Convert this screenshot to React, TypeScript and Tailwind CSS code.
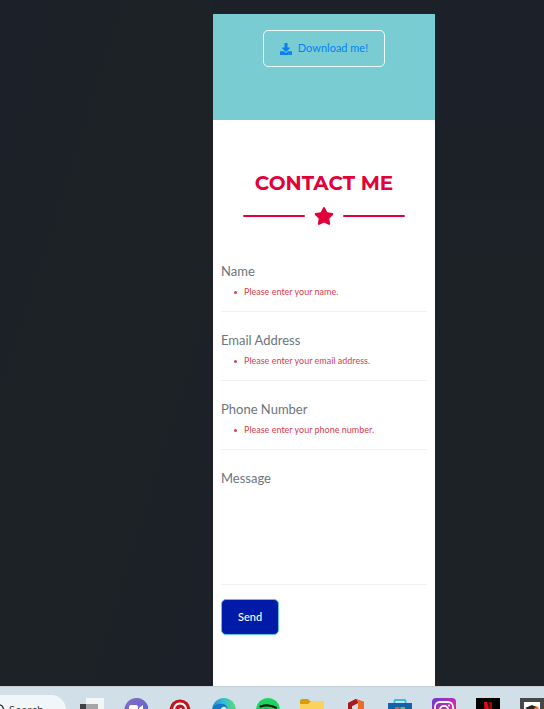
import type { ReactNode } from "react";
import { FaDownload, FaStar } from "react-icons/fa";

const fields = [
  { id: "name", label: "Name", type: "text", error: "Please enter your name." },
  { id: "email", label: "Email Address", type: "email", error: "Please enter your email address." },
  { id: "phone", label: "Phone Number", type: "tel", error: "Please enter your phone number." },
];

function Field({ id, label, type, error }: (typeof fields)[number]) {
  return (
    <div className="mb-4 h-[53px] border-b border-[#f1f2f3]">
      <input
        id={id}
        type={type}
        placeholder={label}
        aria-label={label}
        aria-describedby={`${id}-error`}
        className="block h-6 w-full bg-transparent text-[13px] leading-6 text-[#6c757d] outline-none placeholder:text-[#6c757d] placeholder:opacity-100"
      />
      <ul id={`${id}-error`} className="pl-[13px] text-[9px] leading-[18px] text-[#d9404f]">
        <li className="flex items-center gap-[7px] before:size-[3px] before:rounded-full before:bg-current">{error}</li>
      </ul>
    </div>
  );
}

function AppIcon({ label, children }: { label: string; children: ReactNode }) {
  return (
    <button type="button" aria-label={label} className="size-6 shrink-0">
      <svg viewBox="0 0 24 24" className="block size-6" aria-hidden="true">
        {children}
      </svg>
    </button>
  );
}

function Taskbar() {
  return (
    <footer className="h-[23px] shrink-0 overflow-hidden border-t border-[#c3cdd3] bg-[#d1e0e8]">
      <div className="flex h-[46px] items-center gap-5">
        <button
          type="button"
          className="-ml-5 -mr-[6px] flex h-[30px] w-[86px] shrink-0 items-center gap-[5px] rounded-full bg-[#f1f6f9] pl-3 font-['Open_Sans',sans-serif] text-[11px] text-[#333]"
        >
          <svg viewBox="0 0 12 12" className="size-3 shrink-0" fill="none" stroke="#222" strokeWidth="1.4" aria-hidden="true">
            <circle cx="7" cy="5" r="4.2" />
            <path d="M4 8 1 11" />
          </svg>
          Search
        </button>
        <AppIcon label="Task view">
          <path d="M6 0h18v18H6z" fill="#f4f5f5" />
          <path d="M0 6h18v18H0z" fill="#404142" />
          <path d="M6 6h12v12H6z" fill="#a4a6a7" />
        </AppIcon>
        <AppIcon label="Chat">
          <defs>
            <linearGradient id="chat" x1="0" y1="0" x2="1" y2="1">
              <stop stopColor="#8a6cc5" />
              <stop offset="1" stopColor="#5566cf" />
            </linearGradient>
          </defs>
          <path d="M12 0a12 12 0 1 1-6 22L0 24l2-6A12 12 0 0 1 12 0Z" fill="url(#chat)" />
          <rect x="5" y="7" width="9" height="10" rx="2" fill="#fff" />
          <path d="m15 10 4-3v10l-4-3Z" fill="#fff" />
        </AppIcon>
        <AppIcon label="Pinterest">
          <circle cx="12" cy="12" r="10.5" fill="#c1151c" />
          <path d="M7.500 14.500C4.500 9 8 5.500 12 5.500s7 3 5.500 7.500-6 4-6 2L13 10m-2 4-1.500 7" fill="none" stroke="#fff" strokeWidth="2" />
        </AppIcon>
        <AppIcon label="Edge">
          <defs>
            <linearGradient id="edge" x1="0" y1="0" x2="1" y2="0">
              <stop stopColor="#238bd2" />
              <stop offset="0.5" stopColor="#35bed6" />
              <stop offset="1" stopColor="#5edb70" />
            </linearGradient>
          </defs>
          <circle cx="12" cy="12" r="12" fill="url(#edge)" />
          <path d="M0 12C1 7 6 5 10 6c4 0 6 3 5 6-1 2-4 4-2 7l-4 5A12 12 0 0 1 0 12Z" fill="#1477c7" />
          <path d="M9 13c-1-3 2-5 4-4s3 3 1 5Z" fill="#d3edf3" />
        </AppIcon>
        <AppIcon label="Spotify">
          <circle cx="12" cy="12" r="12" fill="#1ed45f" />
          <path d="M4.500 8.500c5-1.800 11-1.300 15.500 1.200M5 12.500c5-1.400 9-.8 13 1.300M6 16.300c4-1 7-.5 10 1.200" fill="none" stroke="#101b13" strokeWidth="2.200" strokeLinecap="round" />
        </AppIcon>
        <AppIcon label="File Explorer">
          <path d="M0 3q0-2 2-2h6l2 2h14v10H0Z" fill="#d99d0b" />
          <path d="M0 6h8l3-3h13v19H0Z" fill="#fbd35c" />
        </AppIcon>
        <AppIcon label="Office">
          <path d="M12 1 4 5v13l4-2V8l6-3v16l-8-1 8 4 6-3V4Z" fill="#c52b13" />
          <path d="m12 1 8 3v17l-6 3V5Z" fill="#ef6a22" />
          <path d="m12 1-8 4v13l4-2V8l6-3Z" fill="#a7191c" />
        </AppIcon>
        <AppIcon label="Microsoft Store">
          <path d="M6.500 6V3q0-1 1-1h9q1 0 1 1v3" fill="none" stroke="#36b9ed" strokeWidth="1.800" />
          <path d="M0 5h24v16q0 3-3 3H3q-3 0-3-3Z" fill="#1263a9" />
          <path d="M7 9h4.500v4.500H7z" fill="#ef5130" />
          <path d="M12.500 9H17v4.500h-4.500z" fill="#81bc32" />
          <path d="M7 14.500h4.500V19H7z" fill="#2ea7e8" />
          <path d="M12.500 14.500H17V19h-4.500z" fill="#fac22b" />
        </AppIcon>
        <AppIcon label="Instagram">
          <defs>
            <linearGradient id="insta" x1="0" y1="0" x2="1" y2="1">
              <stop stopColor="#6b3cd2" />
              <stop offset="0.5" stopColor="#bd2bb2" />
              <stop offset="1" stopColor="#ee3b60" />
            </linearGradient>
          </defs>
          <rect width="24" height="24" rx="4" fill="url(#insta)" />
          <rect x="3" y="4" width="18" height="17" rx="5" fill="none" stroke="#fff" strokeWidth="1.800" />
          <circle cx="12" cy="12" r="4.200" fill="none" stroke="#fff" strokeWidth="1.800" />
          <circle cx="16.900" cy="7.500" r="1" fill="#fff" />
        </AppIcon>
        <AppIcon label="Netflix">
          <path d="M0 0h24v24H0z" fill="#000" />
          <path d="M9.300 4v16M14.700 4v16" stroke="#a80710" strokeWidth="2.600" />
          <path d="M8 4h3l5 16h-3Z" fill="#e50914" />
        </AppIcon>
        <AppIcon label="Study app">
          <path d="M0 0h24v24H0z" fill="#484848" />
          <path d="M4 4h16v17H4z" fill="#fff" />
          <circle cx="15" cy="12" r="4" fill="#e77b38" />
          <path d="m5 10 7-3 4 2-5 4Z" fill="#252525" />
        </AppIcon>
      </div>
    </footer>
  );
}

export default function App() {
  return (
    <div className="flex h-screen flex-col overflow-hidden font-[Lato,sans-serif]">
      <main className="grid min-h-0 flex-1 grid-cols-[213fr_222fr_109fr] bg-linear-to-b from-[#1c2029] via-[#1c2226] to-[#1c2225] pt-[14px]">
        <div className="-mt-[14px] bg-linear-to-br from-[#1c2029] via-[#1c2225] to-[#1c2029]" />
        <div className="flex flex-col bg-white">
          <section className="h-[106px] shrink-0 bg-[#79cdd2] pt-4 text-center">
            <a
              href="#download"
              className="inline-flex h-[37px] items-center gap-[6px] rounded-[5px] border border-[#eefafa] px-4 text-[11px] text-[#087ff5]"
            >
              <FaDownload className="size-3" aria-hidden="true" />
              Download me!
            </a>
          </section>
          <section className="px-2 pt-[50px]">
            <h2 className="text-center font-[Montserrat,Inter,sans-serif] text-xl leading-[26px] font-bold text-[#e4003a]">
              CONTACT ME
            </h2>
            <div className="mt-[10px] flex items-center justify-center gap-[9px] text-[#e4003a]">
              <span className="h-[2px] w-[62px] rounded-full bg-current" />
              <FaStar className="size-5" aria-hidden="true" />
              <span className="h-[2px] w-[62px] rounded-full bg-current" />
            </div>
            <form className="mt-[33px]" noValidate>
              {fields.map((field) => (
                <Field key={field.id} {...field} />
              ))}
              <textarea
                id="message"
                placeholder="Message"
                aria-label="Message"
                className="block h-[119px] w-full resize-none border-b border-[#f1f2f3] bg-transparent text-[13px] leading-6 text-[#6c757d] outline-none placeholder:text-[#6c757d] placeholder:opacity-100"
              />
              <button
                type="submit"
                className="mt-[14px] h-9 rounded-[5px] border border-[#66c4cf] bg-[#001ba8] px-4 text-[11px] font-medium text-white"
              >
                Send
              </button>
            </form>
          </section>
        </div>
      </main>
      <Taskbar />
    </div>
  );
}
